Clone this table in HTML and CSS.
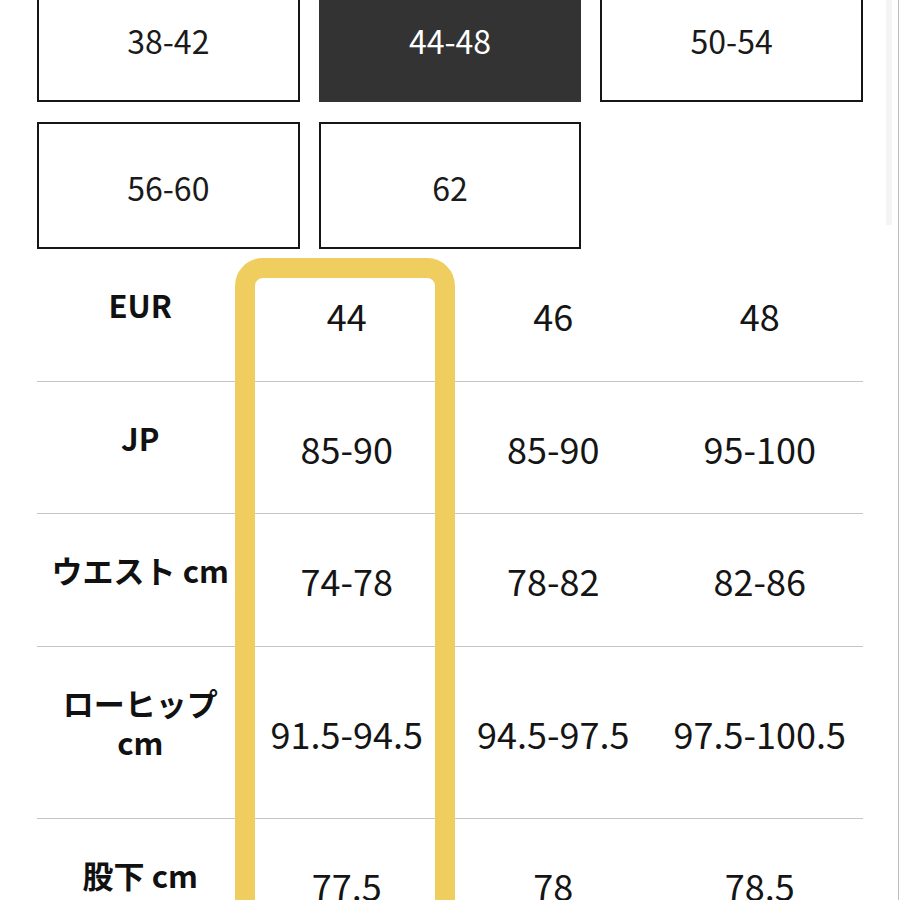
FILE: index.html
```html
<!DOCTYPE html>
<html lang="ja">
<head>
<meta charset="utf-8">
<link rel="stylesheet" href="styles.css">
</head>
<body>
<div class="page">
  <div class="content">
    <div class="sizes">
      <div class="size">38-42</div>
      <div class="size active">44-48</div>
      <div class="size">50-54</div>
      <div class="size">56-60</div>
      <div class="size">62</div>
    </div>
    <div class="table">
      <div class="row">
        <div class="label">EUR</div>
        <div class="val">44</div>
        <div class="val">46</div>
        <div class="val">48</div>
      </div>
      <div class="row">
        <div class="label">JP</div>
        <div class="val">85-90</div>
        <div class="val">85-90</div>
        <div class="val">95-100</div>
      </div>
      <div class="row">
        <div class="label">ウエスト cm</div>
        <div class="val">74-78</div>
        <div class="val">78-82</div>
        <div class="val">82-86</div>
      </div>
      <div class="row tall">
        <div class="label">ローヒップ<br>cm</div>
        <div class="val">91.5-94.5</div>
        <div class="val">94.5-97.5</div>
        <div class="val">97.5-100.5</div>
      </div>
      <div class="row">
        <div class="label">股下 cm</div>
        <div class="val">77.5</div>
        <div class="val">78</div>
        <div class="val">78.5</div>
      </div>
      <div class="highlight"></div>
    </div>
  </div>
  <div class="scrolltrack"></div>
</div>
</body>
</html>
```
FILE: styles.css
```css
html, body {
  margin: 0;
  padding: 0;
  background: #ffffff;
}
body {
  font-family: "Noto Sans CJK JP", "Noto Sans", sans-serif;
  color: #111111;
  overflow: hidden;
}
.page {
  position: relative;
  width: 898px;
  height: 900px;
  border-right: 1px solid #bdbdbd;
  overflow: hidden;
}
.content {
  padding-left: 37px;
  width: 826px;
  margin-top: -25px;
}
.sizes {
  display: grid;
  grid-template-columns: repeat(3, 1fr);
  column-gap: 19px;
  row-gap: 20px;
}
.size {
  box-sizing: border-box;
  height: 127px;
  border: 2px solid #161616;
  display: flex;
  align-items: center;
  justify-content: center;
  font-size: 32px;
  color: #1a1a1a;
  padding-top: 2px;
}
.size.active {
  background: #333333;
  border-color: #333333;
  color: #ffffff;
}
.table {
  position: relative;
}
.row {
  display: grid;
  grid-template-columns: repeat(4, 1fr);
  height: 133px;
  box-sizing: border-box;
  border-bottom: 1px solid #c6c6c6;
}
.row:nth-child(2) {
  height: 132px;
}
.row.tall {
  height: 172px;
}
.label {
  display: flex;
  align-items: center;
  justify-content: center;
  text-align: center;
  font-weight: 700;
  font-size: 31px;
  line-height: 1.25;
  padding-bottom: 19px;
}
.val {
  display: flex;
  align-items: center;
  justify-content: center;
  font-size: 36px;
  color: #151515;
}
.highlight {
  position: absolute;
  left: 198px;
  top: 9px;
  width: 220px;
  height: 800px;
  box-sizing: border-box;
  border: 20px solid #efcd5e;
  border-radius: 28px;
}
.scrolltrack {
  position: absolute;
  right: 6px;
  top: 0;
  width: 6px;
  height: 225px;
  background: #f4f4f4;
}
```
